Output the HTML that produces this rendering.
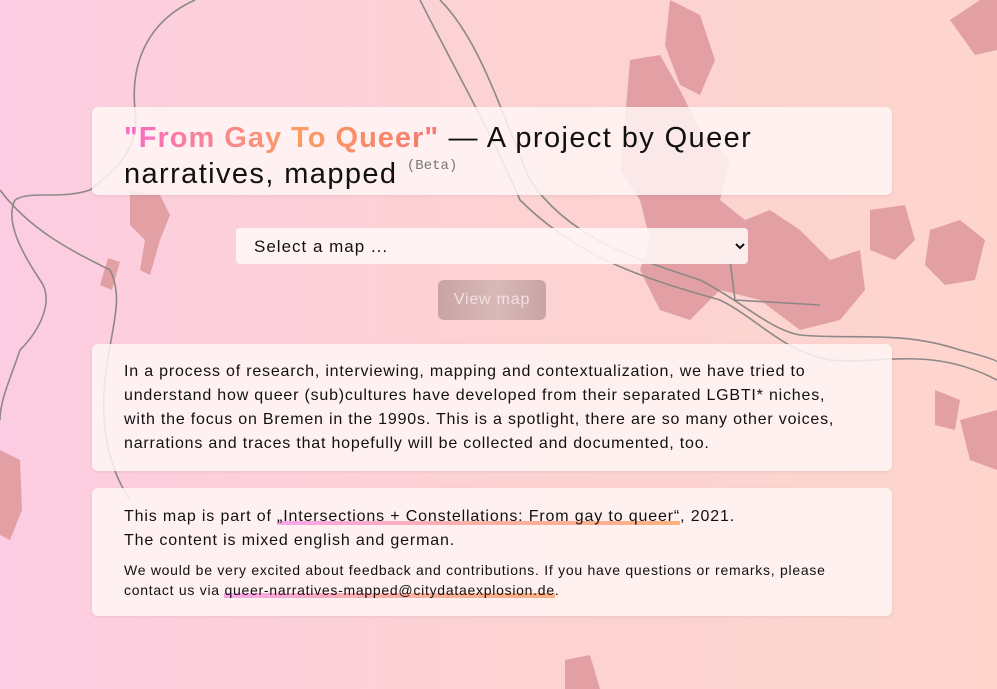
<!DOCTYPE html>
<html><head><meta charset="utf-8"><style>
body{margin:0;width:997px;height:689px;overflow:hidden;font-family:"Liberation Sans",sans-serif;background:linear-gradient(90deg,#fccde2 0%,#fcd2d3 50%,#fdd5cd 100%);position:relative;color:#111}
svg.bg{position:absolute;left:0;top:0}
.card{position:absolute;left:92px;width:800px;background:rgba(255,246,246,.85);border-radius:6px;box-shadow:0 1px 3px rgba(0,0,0,.08);box-sizing:border-box}
.t{top:107px;height:88px;padding:13px 32px;font-size:29px;line-height:36px;letter-spacing:1.4px;white-space:nowrap}
.g{font-weight:bold;background:linear-gradient(90deg,#f76ac7,#fb9d63 55%,#f7786e);-webkit-background-clip:text;color:transparent;letter-spacing:1px}
.beta{font-family:"Liberation Mono",monospace;font-size:14px;color:#777;vertical-align:top;position:relative;top:-8px;letter-spacing:0}
select{position:absolute;left:236px;top:228px;width:512px;height:36px;border:none;border-radius:4px;background:rgba(255,246,246,.9);font-size:17px;padding:0 14px;font-family:"Liberation Sans",sans-serif;letter-spacing:1px;color:#111}
.btn{position:absolute;left:438px;top:280px;width:108px;height:40px;border-radius:6px;background:linear-gradient(90deg,#c9a3a5,#d9b9b8 55%,#c9a3a5);color:#f1e1e1;font-size:16px;line-height:40px;text-align:center;letter-spacing:.8px}
.p{padding:0 32px;font-size:16px;line-height:24px;letter-spacing:.8px;white-space:nowrap}
.u{background:linear-gradient(90deg,#f9a6ea,#fdb0a6,#fbb07f) no-repeat 0 13px/100% 8px}
</style></head><body>
<svg class="bg" width="997" height="689" viewBox="0 0 997 689">
<g fill="#e3a0a4">
<path d="M130 190 L160 195 L170 215 L160 240 L150 275 L140 270 L145 240 L130 225Z"/>
<path d="M108 258 L120 262 L112 290 L100 285Z"/>
<path d="M670 0 L700 15 L715 60 L700 95 L680 85 L665 45Z"/>
<path d="M630 60 L660 55 L680 90 L700 130 L730 160 L720 200 L745 220 L770 210 L800 230 L830 260 L860 250 L865 290 L840 320 L800 330 L760 300 L720 290 L690 320 L660 310 L640 270 L650 240 L640 200 L620 170 L625 120Z"/>
<path d="M870 210 L905 205 L915 240 L895 260 L870 250Z"/>
<path d="M950 20 L980 0 L997 0 L997 50 L975 55Z"/>
<path d="M930 230 L960 220 L985 240 L975 280 L945 285 L925 265Z"/>
<path d="M0 450 L20 460 L22 510 L10 540 L0 535Z"/>
<path d="M935 390 L960 400 L955 430 L935 425Z"/>
<path d="M565 660 L590 655 L600 689 L565 689Z"/>
<path d="M960 420 L997 410 L997 470 L970 460Z"/>
</g>
<g fill="none" stroke="#8e8888" stroke-width="1.6">
<path d="M195 0 C150 20 130 60 135 110 C140 150 115 170 90 190 C60 200 30 190 15 200 C5 220 20 250 40 280 C55 300 40 330 20 350 C10 380 0 400 0 420"/>
<path d="M0 190 C30 230 70 250 110 270 C125 300 110 330 105 380 C100 430 110 470 130 500"/>
<path d="M440 0 C480 40 500 110 530 180 C570 240 640 260 700 280 C740 300 770 330 800 335 C850 340 900 330 960 350 C980 355 997 360 997 362"/>
<path d="M420 0 C450 60 490 130 520 200 C580 260 650 280 720 300 C760 320 780 350 830 360 C880 365 930 345 997 380"/>
<path d="M730 260 L735 300 L820 305"/>
</g>
</svg>
<div class="card t"><span class="g">"From Gay To Queer"</span> — A project by Queer<br>narratives, mapped <span class="beta">(Beta)</span></div>
<select><option>Select a map ...</option></select>
<div class="btn">View map</div>
<div class="card p" style="top:344px;height:127px;padding-top:16px">In a process of research, interviewing, mapping and contextualization, we have tried to<br>understand how queer (sub)cultures have developed from their separated LGBTI* niches,<br>with the focus on Bremen in the 1990s. This is a spotlight, there are so many other voices,<br>narrations and traces that hopefully will be collected and documented, too.</div>
<div class="card p" style="top:488px;height:128px;padding-top:17px;letter-spacing:.85px">This map is part of <span class="u">„Intersections + Constellations: From gay to queer“</span>, 2021.<br>The content is mixed english and german.
<div style="font-size:14px;line-height:20px;margin-top:7px;letter-spacing:.73px">We would be very excited about feedback and contributions. If you have questions or remarks, please<br>contact us via <span class="u" style="background-position:0 11px;background-size:100% 7px">queer-narratives-mapped@citydataexplosion.de</span>.</div></div>
</body></html>
